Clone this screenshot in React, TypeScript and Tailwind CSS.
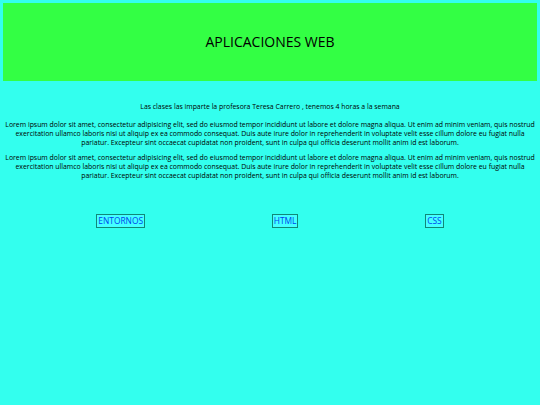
const lorem =
  'Lorem ipsum dolor sit amet, consectetur adipisicing elit, sed do eiusmod tempor incididunt ut labore et dolore magna aliqua. Ut enim ad minim veniam, quis nostrud exercitation ullamco laboris nisi ut aliquip ex ea commodo consequat. Duis aute irure dolor in reprehenderit in voluptate velit esse cillum dolore eu fugiat nulla pariatur. Excepteur sint occaecat cupidatat non proident, sunt in culpa qui officia deserunt mollit anim id est laborum.';

const links = ['ENTORNOS', 'HTML', 'CSS'];

export default function App() {
  return (
    <div
      className="min-h-[405px] bg-[#33ffee] p-[3px] text-black"
      style={{ fontFamily: '"Open Sans", "Noto Sans", sans-serif' }}
    >
      <header className="flex h-[78px] items-center justify-center bg-[#33ff44]">
        <h1 className="text-[14px] leading-none">APLICACIONES WEB</h1>
      </header>

      <main className="pt-[21px] text-center text-[6.9px] leading-[9px]">
        <p>Las clases las imparte la profesora Teresa Carrero , tenemos 4 horas a la semana</p>
        <p className="mt-[9px]">{lorem}</p>
        <p className="mt-[6px]">{lorem}</p>
      </main>

      <nav className="mt-[34px] flex justify-around px-[30px]">
        {links.map((link) => (
          <a
            key={link}
            href="#"
            className="border border-[#118877] bg-[#44ffff] px-px text-[8.4px] leading-[12px] text-[#0048ee]"
          >
            {link}
          </a>
        ))}
      </nav>
    </div>
  );
}
